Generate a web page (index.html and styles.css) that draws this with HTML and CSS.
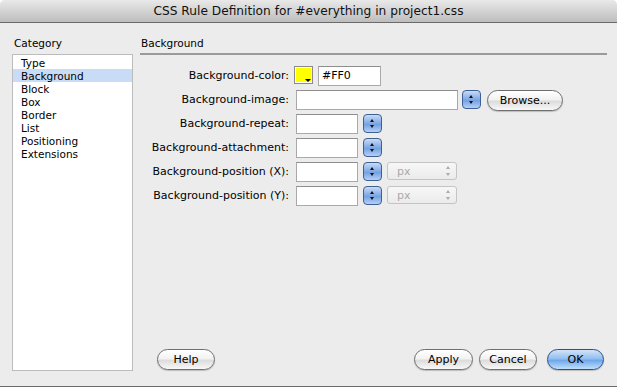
FILE: index.html
```html
<!DOCTYPE html>
<html lang="en">
<head>
    <meta charset="UTF-8">
    <title>CSS Rule Definition</title>
    <link rel="stylesheet" href="styles.css">
</head>
<body>
    <div id="window">
        <div id="titlebar">CSS Rule Definition for #everything in project1.css</div>
        <div id="content">
            <section id="category">
                <p class="heading">Category</p>
                <ul id="category_list">
                    <li>Type</li>
                    <li class="selected">Background</li>
                    <li>Block</li>
                    <li>Box</li>
                    <li>Border</li>
                    <li>List</li>
                    <li>Positioning</li>
                    <li>Extensions</li>
                </ul>
            </section>
            <section id="panel">
                <p class="heading panel_heading">Background</p>
                <div id="form">
                    <label>Background-color:</label>
                    <div class="controls">
                        <span class="swatch"><span class="swatch_fill"></span><span class="swatch_arrow"></span></span>
                        <span class="field color_field">#FF0</span>
                    </div>

                    <label>Background-image:</label>
                    <div class="controls">
                        <span class="field image_field"></span>
                        <span class="spinner"></span>
                        <span class="button browse">Browse...</span>
                    </div>

                    <label>Background-repeat:</label>
                    <div class="controls">
                        <span class="field"></span>
                        <span class="spinner"></span>
                    </div>

                    <label>Background-attachment:</label>
                    <div class="controls">
                        <span class="field"></span>
                        <span class="spinner"></span>
                    </div>

                    <label>Background-position (X):</label>
                    <div class="controls">
                        <span class="field"></span>
                        <span class="spinner"></span>
                        <span class="unit">px<span class="unit_arrows"></span></span>
                    </div>

                    <label>Background-position (Y):</label>
                    <div class="controls">
                        <span class="field"></span>
                        <span class="spinner"></span>
                        <span class="unit">px<span class="unit_arrows"></span></span>
                    </div>
                </div>
                <div id="buttons">
                    <span class="button help">Help</span>
                    <span class="spacer"></span>
                    <span class="button apply">Apply</span>
                    <span class="button cancel">Cancel</span>
                    <span class="button ok">OK</span>
                </div>
            </section>
        </div>
    </div>
</body>
</html>
```

FILE: styles.css
```css
* {
    margin: 0;
    padding: 0;
    box-sizing: border-box;
}

html, body {
    height: 100%;
    background-color: #fff;
    font-family: 'DejaVu Sans', 'Liberation Sans', sans-serif;
    font-size: 10.5px;
    color: #000;
    overflow: hidden;
}

ul {
    list-style: none;
}

#window {
    width: 617px;
    height: 387px;
    background-color: #ececec;
    border-radius: 5px 5px 0 0;
    border-bottom: 1px solid #6a6a6a;
    display: flex;
    flex-direction: column;
}

#titlebar {
    height: 23px;
    background: linear-gradient(#e9e9e9, #bdbdbd);
    border-bottom: 1px solid #6b6b6b;
    border-radius: 5px 5px 0 0;
    text-align: center;
    font-size: 12.2px;
    line-height: 22px;
    color: #111;
}

#content {
    flex: 1;
    display: flex;
    padding: 13px 0 15px 12px;
}

/* 왼쪽 카테고리 */
#category {
    width: 121px;
    display: flex;
    flex-direction: column;
}

.heading {
    padding-left: 2px;
    height: 18px;
    line-height: 15px;
}

#category_list {
    flex: 1;
    background-color: #fff;
    border: 1px solid #bcbcbc;
    padding-top: 1px;
}

#category_list li {
    height: 13px;
    line-height: 14px;
    padding-left: 8px;
}

#category_list li.selected {
    background-color: #c8dcf7;
}

/* 오른쪽 패널 */
#panel {
    flex: 1;
    display: flex;
    flex-direction: column;
    padding-left: 7px;
}

.panel_heading {
    padding-left: 1px;
    width: 467px;
    border-bottom: 2px solid #9a9a9a;
    height: 19px;
    margin-bottom: 11px;
}

#form {
    display: grid;
    grid-template-columns: 149px 1fr;
    grid-auto-rows: 24px;
    column-gap: 5px;
}

#form label {
    text-align: right;
    line-height: 20px;
    font-size: 11px;
}

.controls {
    display: flex;
    align-items: flex-start;
    gap: 5px;
    height: 20px;
}

.field {
    width: 62px;
    height: 20px;
    background-color: #fff;
    border: 1px solid #a9a9a9;
    border-top-color: #8e8e8e;
    padding-left: 3px;
    line-height: 18px;
    font-size: 11px;
}

.image_field {
    width: 162px;
    margin-left: 2px;
    margin-right: -1px;
}

.color_field {
    width: 63px;
}

.controls .field:first-child {
    margin-left: 2px;
}

.swatch {
    position: relative;
    width: 19px;
    height: 18px;
    border: 1px solid #8a8a8a;
    background-color: #fff;
    padding: 1px;
}

.swatch_fill {
    display: block;
    width: 100%;
    height: 100%;
    background-color: #ffff00;
}

.swatch_arrow {
    position: absolute;
    right: 1px;
    bottom: 1px;
    width: 0;
    height: 0;
    border-left: 3px solid transparent;
    border-right: 3px solid transparent;
    border-top: 3px solid #000;
}

.spinner {
    position: relative;
    width: 19px;
    height: 19px;
    border: 1px solid #3c5f95;
    border-radius: 4px;
    background: linear-gradient(#c8dcf6, #7fa8e4 50%, #6d9ce0 51%, #b4d1f6);
}

.spinner::before, .spinner::after {
    content: "";
    position: absolute;
    left: 6px;
    width: 0;
    height: 0;
    border-left: 2.5px solid transparent;
    border-right: 2.5px solid transparent;
}

.spinner::before {
    top: 4px;
    border-bottom: 3px solid #111;
}

.spinner::after {
    bottom: 4px;
    border-top: 3px solid #111;
}

.unit {
    position: relative;
    width: 70px;
    height: 18px;
    border: 1px solid #c4c4c4;
    border-radius: 3px;
    background: linear-gradient(#f7f7f7, #ebebeb);
    color: #a9a9a9;
    padding-left: 9px;
    line-height: 17px;
    font-size: 11px;
}

.unit_arrows::before, .unit_arrows::after {
    content: "";
    position: absolute;
    right: 6px;
    width: 0;
    height: 0;
    border-left: 2.5px solid transparent;
    border-right: 2.5px solid transparent;
}

.unit_arrows::before {
    top: 3px;
    border-bottom: 3px solid #a9a9a9;
}

.unit_arrows::after {
    bottom: 3px;
    border-top: 3px solid #a9a9a9;
}

.button {
    display: inline-block;
    height: 21px;
    border: 1px solid #6f6f6f;
    border-radius: 11px;
    background: linear-gradient(#ffffff, #f2f2f2 45%, #dcdcdc 55%, #f8f8f8);
    text-align: center;
    line-height: 19px;
    font-size: 11px;
    box-shadow: 0 1px 1px rgba(0, 0, 0, 0.2);
}

.browse {
    width: 76px;
    margin-left: 1px;
}

#buttons {
    margin-top: auto;
    display: flex;
    align-items: center;
    padding-left: 17px;
    padding-bottom: 1px;
}

.spacer {
    flex: 1;
}

.help {
    width: 58px;
}

.apply {
    width: 59px;
}

.cancel {
    width: 58px;
    margin-left: 6px;
}

.ok {
    width: 57px;
    margin-left: 10px;
    margin-right: 13px;
    border-color: #2f4f86;
    background: linear-gradient(#d2e4fa, #93bff0 45%, #6fa8ea 55%, #bfe0fb);
}
```
